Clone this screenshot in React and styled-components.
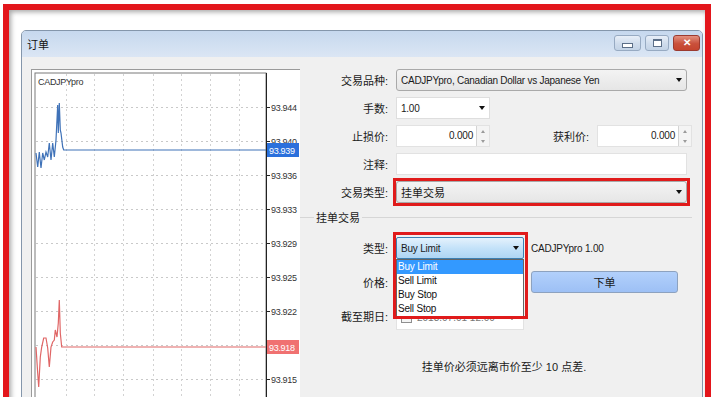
import styled, { createGlobalStyle } from "styled-components";

const GlobalStyle = createGlobalStyle`
  html, body {
    margin: 0;
    padding: 0;
    background: #fff;
  }
  body {
    font-family: "Liberation Sans", "Noto Sans CJK SC", sans-serif;
    color: #1a1a1a;
  }
`;

const Page = styled.div`
  width: 720px;
  height: 397px;
  overflow: hidden;
  box-sizing: border-box;
  padding: 4px 0 0 3px;
  background: #fff;
`;

const RedFrame = styled.div`
  width: 708px;
  height: 430px;
  box-sizing: border-box;
  border: 6px solid #e3161c;
  box-shadow: inset 2px 2px 5px rgba(0, 0, 0, 0.35);
  padding: 20px 0 0 12px;
`;

const Window = styled.div`
  width: 682px;
  height: 400px;
  box-sizing: border-box;
  border: 1px solid #8496ab;
  border-radius: 5px 5px 0 0;
  background: #eceef1;
  display: flex;
  flex-direction: column;
`;

const TitleBar = styled.div`
  height: 26px;
  flex: none;
  display: flex;
  align-items: center;
  justify-content: space-between;
  padding: 0 2px 0 5px;
  border-radius: 4px 4px 0 0;
  background: linear-gradient(#c6d8ee, #dbe6f4);
`;

const Title = styled.span`
  font-size: 11px;
  color: #111;
`;

const WinButtons = styled.div`
  display: flex;
  gap: 4px;
  margin-top: -3px;
`;

const WinButton = styled.div`
  width: ${(p) => (p.wide ? 27 : 24)}px;
  height: 16px;
  box-sizing: border-box;
  border: 1px solid ${(p) => (p.close ? "#9b3a30" : "#97aac2")};
  border-radius: 3px;
  background: ${(p) =>
    p.close
      ? "linear-gradient(#e3907f, #c9503b 55%, #c5452f)"
      : "linear-gradient(#e8eff8, #cfdcec 55%, #c3d3e6)"};
  display: flex;
  align-items: center;
  justify-content: center;
  color: #fff;
  font-size: 10px;
  font-weight: bold;
`;

const MinGlyph = styled.div`
  width: 9px;
  height: 3px;
  margin-top: 5px;
  border: 1px solid #5c6f88;
  background: #fff;
`;

const MaxGlyph = styled.div`
  width: 7px;
  height: 5px;
  border: 1px solid #5c6f88;
  border-top-width: 2px;
  background: #fff;
`;

const Body = styled.div`
  flex: 1;
  display: flex;
  padding: 12px 0 0 9px;
  background: #f0f0f0;
`;

const ChartPanel = styled.div`
  width: 269px;
  height: 340px;
  flex: none;
  box-sizing: border-box;
  background: #fff;
  border-top: 1px solid #9a9a9a;
  border-left: 1px solid #9a9a9a;
`;

const FormArea = styled.div`
  flex: 1;
  display: flex;
  flex-direction: column;
  gap: 6px;
  padding-right: 10px;
`;

const Row = styled.div`
  display: flex;
  align-items: center;
  gap: 8px;
  height: 22px;
`;

const Label = styled.span`
  width: 88px;
  flex: none;
  text-align: right;
  font-size: 11px;
  white-space: nowrap;
`;

const SubLabel = styled.span`
  flex: 1;
  text-align: right;
  font-size: 11px;
`;

const Marked = styled.div`
  display: flex;
  outline: 3px solid #e01b1b;
  outline-offset: 0;
`;

const ComboBox = styled.div`
  position: relative;
  width: ${(p) => p.width}px;
  height: 22px;
  box-sizing: border-box;
  display: flex;
  align-items: center;
  padding: 0 4px;
  font-size: ${(p) => (p.cjk ? 11 : 10)}px;
  letter-spacing: ${(p) => (p.cjk ? 0 : -0.25)}px;
  border: 1px solid ${(p) => (p.flat ? "#dedede" : "#a9a9a9")};
  border-radius: ${(p) => (p.flat ? 0 : 3)}px;
  background: ${(p) => (p.flat ? "#fff" : "linear-gradient(#f3f3f3, #e6e6e6)")};
`;

const Arrow = styled.span`
  margin-left: auto;
  width: 0;
  height: 0;
  border-left: 3.5px solid transparent;
  border-right: 3.5px solid transparent;
  border-top: 4px solid #111;
`;

const NumberBox = styled.div`
  width: ${(p) => p.width}px;
  height: 22px;
  box-sizing: border-box;
  display: flex;
  background: #fff;
  border: 1px solid #e2e2e2;
`;

const NumberValue = styled.span`
  flex: 1;
  text-align: right;
  padding-right: 3px;
  font-size: 10px;
  line-height: 20px;
  letter-spacing: -0.2px;
`;

const Spinner = styled.div`
  width: 12px;
  display: flex;
  flex-direction: column;
  border-left: 1px solid #d4d4d4;
  background: #f4f4f4;
`;

const SpinHalf = styled.div`
  flex: 1;
  display: flex;
  align-items: center;
  justify-content: center;
  &::after {
    content: "";
    border-left: 2.5px solid transparent;
    border-right: 2.5px solid transparent;
    ${(p) => (p.up ? "border-bottom" : "border-top")}: 3px solid #9a9a9a;
  }
`;

const TextBox = styled.div`
  width: ${(p) => p.width}px;
  height: 22px;
  box-sizing: border-box;
  background: #fff;
  border: 1px solid #e2e2e2;
`;

const Group = styled.fieldset`
  margin: 0;
  padding: 12px 0 0 0;
  border: none;
  border-top: 1px solid #d6d6d6;
  display: flex;
  flex-direction: column;
`;

const Legend = styled.legend`
  margin-left: 14px;
  padding: 0 2px;
  font-size: 11px;
`;

const GroupGrid = styled.div`
  display: grid;
  grid-template-columns: 88px 128px 146px;
  grid-auto-rows: 22px;
  column-gap: 8px;
  row-gap: 12px;
  align-items: center;
`;

const TypeField = styled.div`
  position: relative;
  height: 22px;
`;

const TypeSelect = styled.div`
  height: 22px;
  box-sizing: border-box;
  display: flex;
  align-items: center;
  padding: 0 4px;
  font-size: 10px;
  letter-spacing: -0.2px;
  border: 1px solid #3c7fb1;
  border-radius: 2px;
  background: linear-gradient(#e5f2fc, #c4e2f9 50%, #aed5f3);
`;

const DropList = styled.ul`
  position: absolute;
  top: 22px;
  left: 0;
  width: 128px;
  margin: 0;
  padding: 0 0 1px;
  list-style: none;
  box-sizing: border-box;
  background: #fff;
  border: 1px solid #646464;
  z-index: 2;
`;

const DropItem = styled.li`
  height: 14px;
  line-height: 14px;
  padding-left: 1px;
  font-size: 10px;
  letter-spacing: -0.2px;
  color: ${(p) => (p.active ? "#fff" : "#111")};
  background: ${(p) => (p.active ? "#3399ff" : "transparent")};
`;

const Highlight = styled.div`
  position: absolute;
  top: -5px;
  left: -3px;
  width: 135px;
  height: 87px;
  box-sizing: border-box;
  border: 3px solid #e01b1b;
  pointer-events: none;
  z-index: 3;
`;

const Info = styled.span`
  font-size: 10px;
  letter-spacing: -0.2px;
  margin-left: -1px;
`;

const OrderButton = styled.div`
  height: 22px;
  box-sizing: border-box;
  margin-left: -1px;
  display: flex;
  align-items: center;
  justify-content: center;
  font-size: 11px;
  border: 1px solid #8da2bf;
  border-radius: 3px;
  background: linear-gradient(#b2d0fb, #9dc0f5);
`;

const DateBox = styled.div`
  height: 25px;
  box-sizing: border-box;
  display: flex;
  align-items: center;
  gap: 5px;
  padding: 0 8px 0 4px;
  margin-top: 3px;
  background: #fff;
  border: 1px solid #e2e2e2;
  font-size: 10px;
  color: #777;
`;

const CheckBox = styled.span`
  width: 9px;
  height: 9px;
  border: 1px solid #8f8f8f;
  background: #f4f4f4;
`;

const Note = styled.div`
  margin-top: 31px;
  text-align: center;
  font-size: 11px;
  padding-left: 16px;
`;

const gridY = [37, 71, 105, 139, 173, 207, 241, 275, 309];
const gridX = [34, 62, 91, 121, 149, 178, 207];
const prices = ["93.944", "93.940", "93.936", "93.933", "93.929", "93.925", "93.922", "93.918", "93.915"];

const bluePts =
  "4,83 5.7,97 7.3,82 9,98 10.7,83 12.3,90 14,82 15.7,87 17.3,73 19,90 20.7,73 22.3,87 24,70 25.7,35 26.3,63 27.3,33 28.3,60 29,63 30.7,77 31.7,80 234,80";
const redPts =
  "4,277 5.7,303 6.7,317 8.3,287 9.7,277 11.7,268 14,268 15.7,278 17.3,297 19,277 20.7,272 22.3,270 23.3,260 25,267 26.3,253 27.3,230 28.3,263 29.7,277 234,277";

const Chart = () => (
  <svg width="268" height="339" style={{ display: "block" }}>
    <rect x="3" y="3" width="231" height="340" fill="#fff" stroke="#7a7a7a" strokeWidth="1" />
    {gridY.map((y) => (
      <line key={"h" + y} x1="4" x2="234" y1={y + 0.5} y2={y + 0.5} stroke="#c9c9c9" strokeDasharray="2 3" />
    ))}
    {gridX.map((x) => (
      <line key={"v" + x} x1={x + 0.5} x2={x + 0.5} y1="4" y2="339" stroke="#d2d2d2" strokeDasharray="2 3" />
    ))}
    <line x1="234.5" x2="234.5" y1="3" y2="339" stroke="#222" />
    {gridY.map((y, i) => (
      <g key={"t" + y}>
        <line x1="234" x2="238" y1={y + 0.5} y2={y + 0.5} stroke="#222" />
        <text x="239" y={y + 3.5} fontSize="9" letterSpacing="-0.3" fill="#333" fontFamily="Liberation Sans, sans-serif">
          {prices[i]}
        </text>
      </g>
    ))}
    <text x="6" y="15" fontSize="9" letterSpacing="-0.3" fill="#333" fontFamily="Liberation Sans, sans-serif">
      CADJPYpro
    </text>
    <polyline points={bluePts} fill="none" stroke="#3f72b8" strokeWidth="1.2" />
    <polyline points={redPts} fill="none" stroke="#e06666" strokeWidth="1.2" />
    <rect x="235" y="73" width="32" height="14" fill="#2b70dc" />
    <text x="237" y="83.5" fontSize="9" letterSpacing="-0.3" fill="#fff" fontFamily="Liberation Sans, sans-serif">
      93.939
    </text>
    <rect x="235" y="270" width="32" height="14" fill="#f07171" />
    <text x="237" y="280.5" fontSize="9" letterSpacing="-0.3" fill="#fff" fontFamily="Liberation Sans, sans-serif">
      93.918
    </text>
  </svg>
);

const NumberInput = ({ width, value }) => (
  <NumberBox width={width}>
    <NumberValue>{value}</NumberValue>
    <Spinner>
      <SpinHalf up />
      <SpinHalf />
    </Spinner>
  </NumberBox>
);

const App = () => {
  return (
    <Page>
      <GlobalStyle />
      <RedFrame>
        <Window>
          <TitleBar>
            <Title>订单</Title>
            <WinButtons>
              <WinButton wide>
                <MinGlyph />
              </WinButton>
              <WinButton>
                <MaxGlyph />
              </WinButton>
              <WinButton wide close>
                ✕
              </WinButton>
            </WinButtons>
          </TitleBar>
          <Body>
            <ChartPanel>
              <Chart />
            </ChartPanel>
            <FormArea>
              <Row>
                <Label>交易品种:</Label>
                <ComboBox width={291}>
                  CADJPYpro, Canadian Dollar vs Japanese Yen
                  <Arrow />
                </ComboBox>
              </Row>
              <Row>
                <Label>手数:</Label>
                <ComboBox width={94} flat>
                  1.00
                  <Arrow />
                </ComboBox>
              </Row>
              <Row>
                <Label>止损价:</Label>
                <NumberInput width={94} value="0.000" />
                <SubLabel>获利价:</SubLabel>
                <NumberInput width={95} value="0.000" />
              </Row>
              <Row>
                <Label>注释:</Label>
                <TextBox width={291} />
              </Row>
              <Row>
                <Label>交易类型:</Label>
                <Marked>
                  <ComboBox width={291} cjk>
                    挂单交易
                    <Arrow />
                  </ComboBox>
                </Marked>
              </Row>
              <Group>
                <Legend>挂单交易</Legend>
                <GroupGrid>
                  <Label>类型:</Label>
                  <TypeField>
                    <TypeSelect>
                      Buy Limit
                      <Arrow />
                    </TypeSelect>
                    <DropList>
                      <DropItem active>Buy Limit</DropItem>
                      <DropItem>Sell Limit</DropItem>
                      <DropItem>Buy Stop</DropItem>
                      <DropItem>Sell Stop</DropItem>
                    </DropList>
                    <Highlight />
                  </TypeField>
                  <Info>CADJPYpro 1.00</Info>
                  <Label>价格:</Label>
                  <TextBox width={128} />
                  <OrderButton>下单</OrderButton>
                  <Label>截至期日:</Label>
                  <DateBox>
                    <CheckBox />
                    2013.07.01 12:00
                    <Arrow />
                  </DateBox>
                </GroupGrid>
                <Note>挂单价必须远离市价至少 10 点差.</Note>
              </Group>
            </FormArea>
          </Body>
        </Window>
      </RedFrame>
    </Page>
  );
};

export default App;
